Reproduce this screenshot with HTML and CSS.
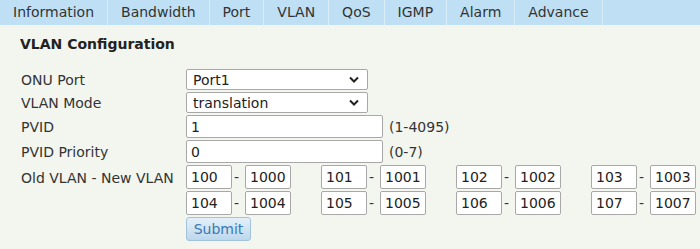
FILE: index.html
```html
<!DOCTYPE html>
<html lang="en">

<head>
  <meta charset="UTF-8">
  <meta name="viewport" content="width=device-width, initial-scale=1.0">
  <title>VLAN Configuration</title>
  <link rel="stylesheet" href="styles.css">
</head>

<body>
  <div class="tabBar">
    <div class="tab">Information</div>
    <div class="tab">Bandwidth</div>
    <div class="tab">Port</div>
    <div class="tab">VLAN</div>
    <div class="tab">QoS</div>
    <div class="tab">IGMP</div>
    <div class="tab">Alarm</div>
    <div class="tab">Advance</div>
  </div>
  <div class="content">
    <div class="title">VLAN Configuration</div>
    <div class="form">
      <div class="label">ONU Port</div>
      <div class="selectWrapper">
        <select class="select">
          <option>Port1</option>
          <option>Port2</option>
        </select>
        <svg class="arrow" width="10" height="7" viewBox="0 0 10 7"><path d="M1 1.5 L5 5.5 L9 1.5" fill="none" stroke="#222" stroke-width="2"/></svg>
      </div>
      <div class="label">VLAN Mode</div>
      <div class="selectWrapper">
        <select class="select">
          <option>translation</option>
          <option>tag</option>
          <option>transparent</option>
        </select>
        <svg class="arrow" width="10" height="7" viewBox="0 0 10 7"><path d="M1 1.5 L5 5.5 L9 1.5" fill="none" stroke="#222" stroke-width="2"/></svg>
      </div>
      <div class="label">PVID</div>
      <div class="field"><input class="text" type="text" value="1"><span class="hint">(1-4095)</span></div>
      <div class="label">PVID Priority</div>
      <div class="field"><input class="text" type="text" value="0"><span class="hint">(0-7)</span></div>
      <div class="label top">Old VLAN - New VLAN</div>
      <div class="pairs" id="pairs"></div>
      <div></div>
      <div><button class="submit">Submit</button></div>
    </div>
  </div>
  <script>
    (function () {
      let pairs = document.querySelector('#pairs');
      for (let i = 0; i < 8; i++) {
        let pair = document.createElement('div');
        pair.className = 'pair';
        pair.innerHTML = '<input class="vid" type="text" value="' + (100 + i) + '">' +
          '<span class="dash">-</span>' +
          '<input class="vid" type="text" value="' + (1000 + i) + '">';
        pairs.appendChild(pair);
      }
    })()
  </script>
</body>

</html>
```

FILE: styles.css
```css
* {
  padding: 0;
  margin: 0;
  box-sizing: border-box;
}

body {
  background: #f3f5ef;
  color: #333;
  font-family: 'DejaVu Sans', Verdana, sans-serif;
  font-size: 14px;
}

.tabBar {
  display: flex;
  height: 25px;
  background: #bfe0f4;
}

.tabBar .tab {
  padding: 0 13px;
  line-height: 25px;
  border-right: 1px solid #d9edf9;
  color: #333;
}

.content {
  padding: 9px 0 0 20px;
}

.title {
  font-weight: bold;
  line-height: 20px;
  color: #222;
  margin-bottom: 15px;
}

.form {
  display: grid;
  grid-template-columns: 166px auto;
  row-gap: 2px;
  align-items: center;
}

.form .label {
  padding-left: 1px;
  color: #333;
}

.form .label.top {
  align-self: start;
  line-height: 26px;
}

.selectWrapper {
  position: relative;
  width: 182px;
  height: 21px;
}

.select {
  appearance: none;
  -webkit-appearance: none;
  width: 182px;
  height: 21px;
  font-family: 'DejaVu Sans', Verdana, sans-serif;
  font-size: 14px;
  color: #222;
  background: #fff;
  border: 1px solid #a8a8a8;
  border-radius: 2px;
  padding-left: 6px;
}

.selectWrapper .arrow {
  position: absolute;
  right: 9px;
  top: 7px;
  pointer-events: none;
}

.field {
  display: flex;
  align-items: center;
}

.text {
  width: 197px;
  height: 23px;
  font-family: 'DejaVu Sans', Verdana, sans-serif;
  font-size: 14px;
  color: #222;
  border: 1px solid #a8a8a8;
  border-radius: 2px;
  padding-left: 4px;
}

.hint {
  margin-left: 6px;
}

.pairs {
  display: grid;
  grid-template-columns: repeat(4, 105px);
  column-gap: 30px;
  row-gap: 2px;
}

.pair {
  display: flex;
  align-items: center;
}

.vid {
  width: 46px;
  height: 24px;
  font-family: 'DejaVu Sans', Verdana, sans-serif;
  font-size: 14px;
  color: #222;
  border: 1px solid #a8a8a8;
  border-radius: 2px;
  padding-left: 4px;
}

.dash {
  width: 13px;
  padding-left: 2px;
}

.submit {
  width: 65px;
  height: 24px;
  font-family: 'DejaVu Sans', Verdana, sans-serif;
  font-size: 14px;
  color: #3a7ab3;
  background: linear-gradient(#e4f0f9, #bcd7ec);
  border: 1px solid #a3c3dc;
  border-radius: 3px;
}
```
